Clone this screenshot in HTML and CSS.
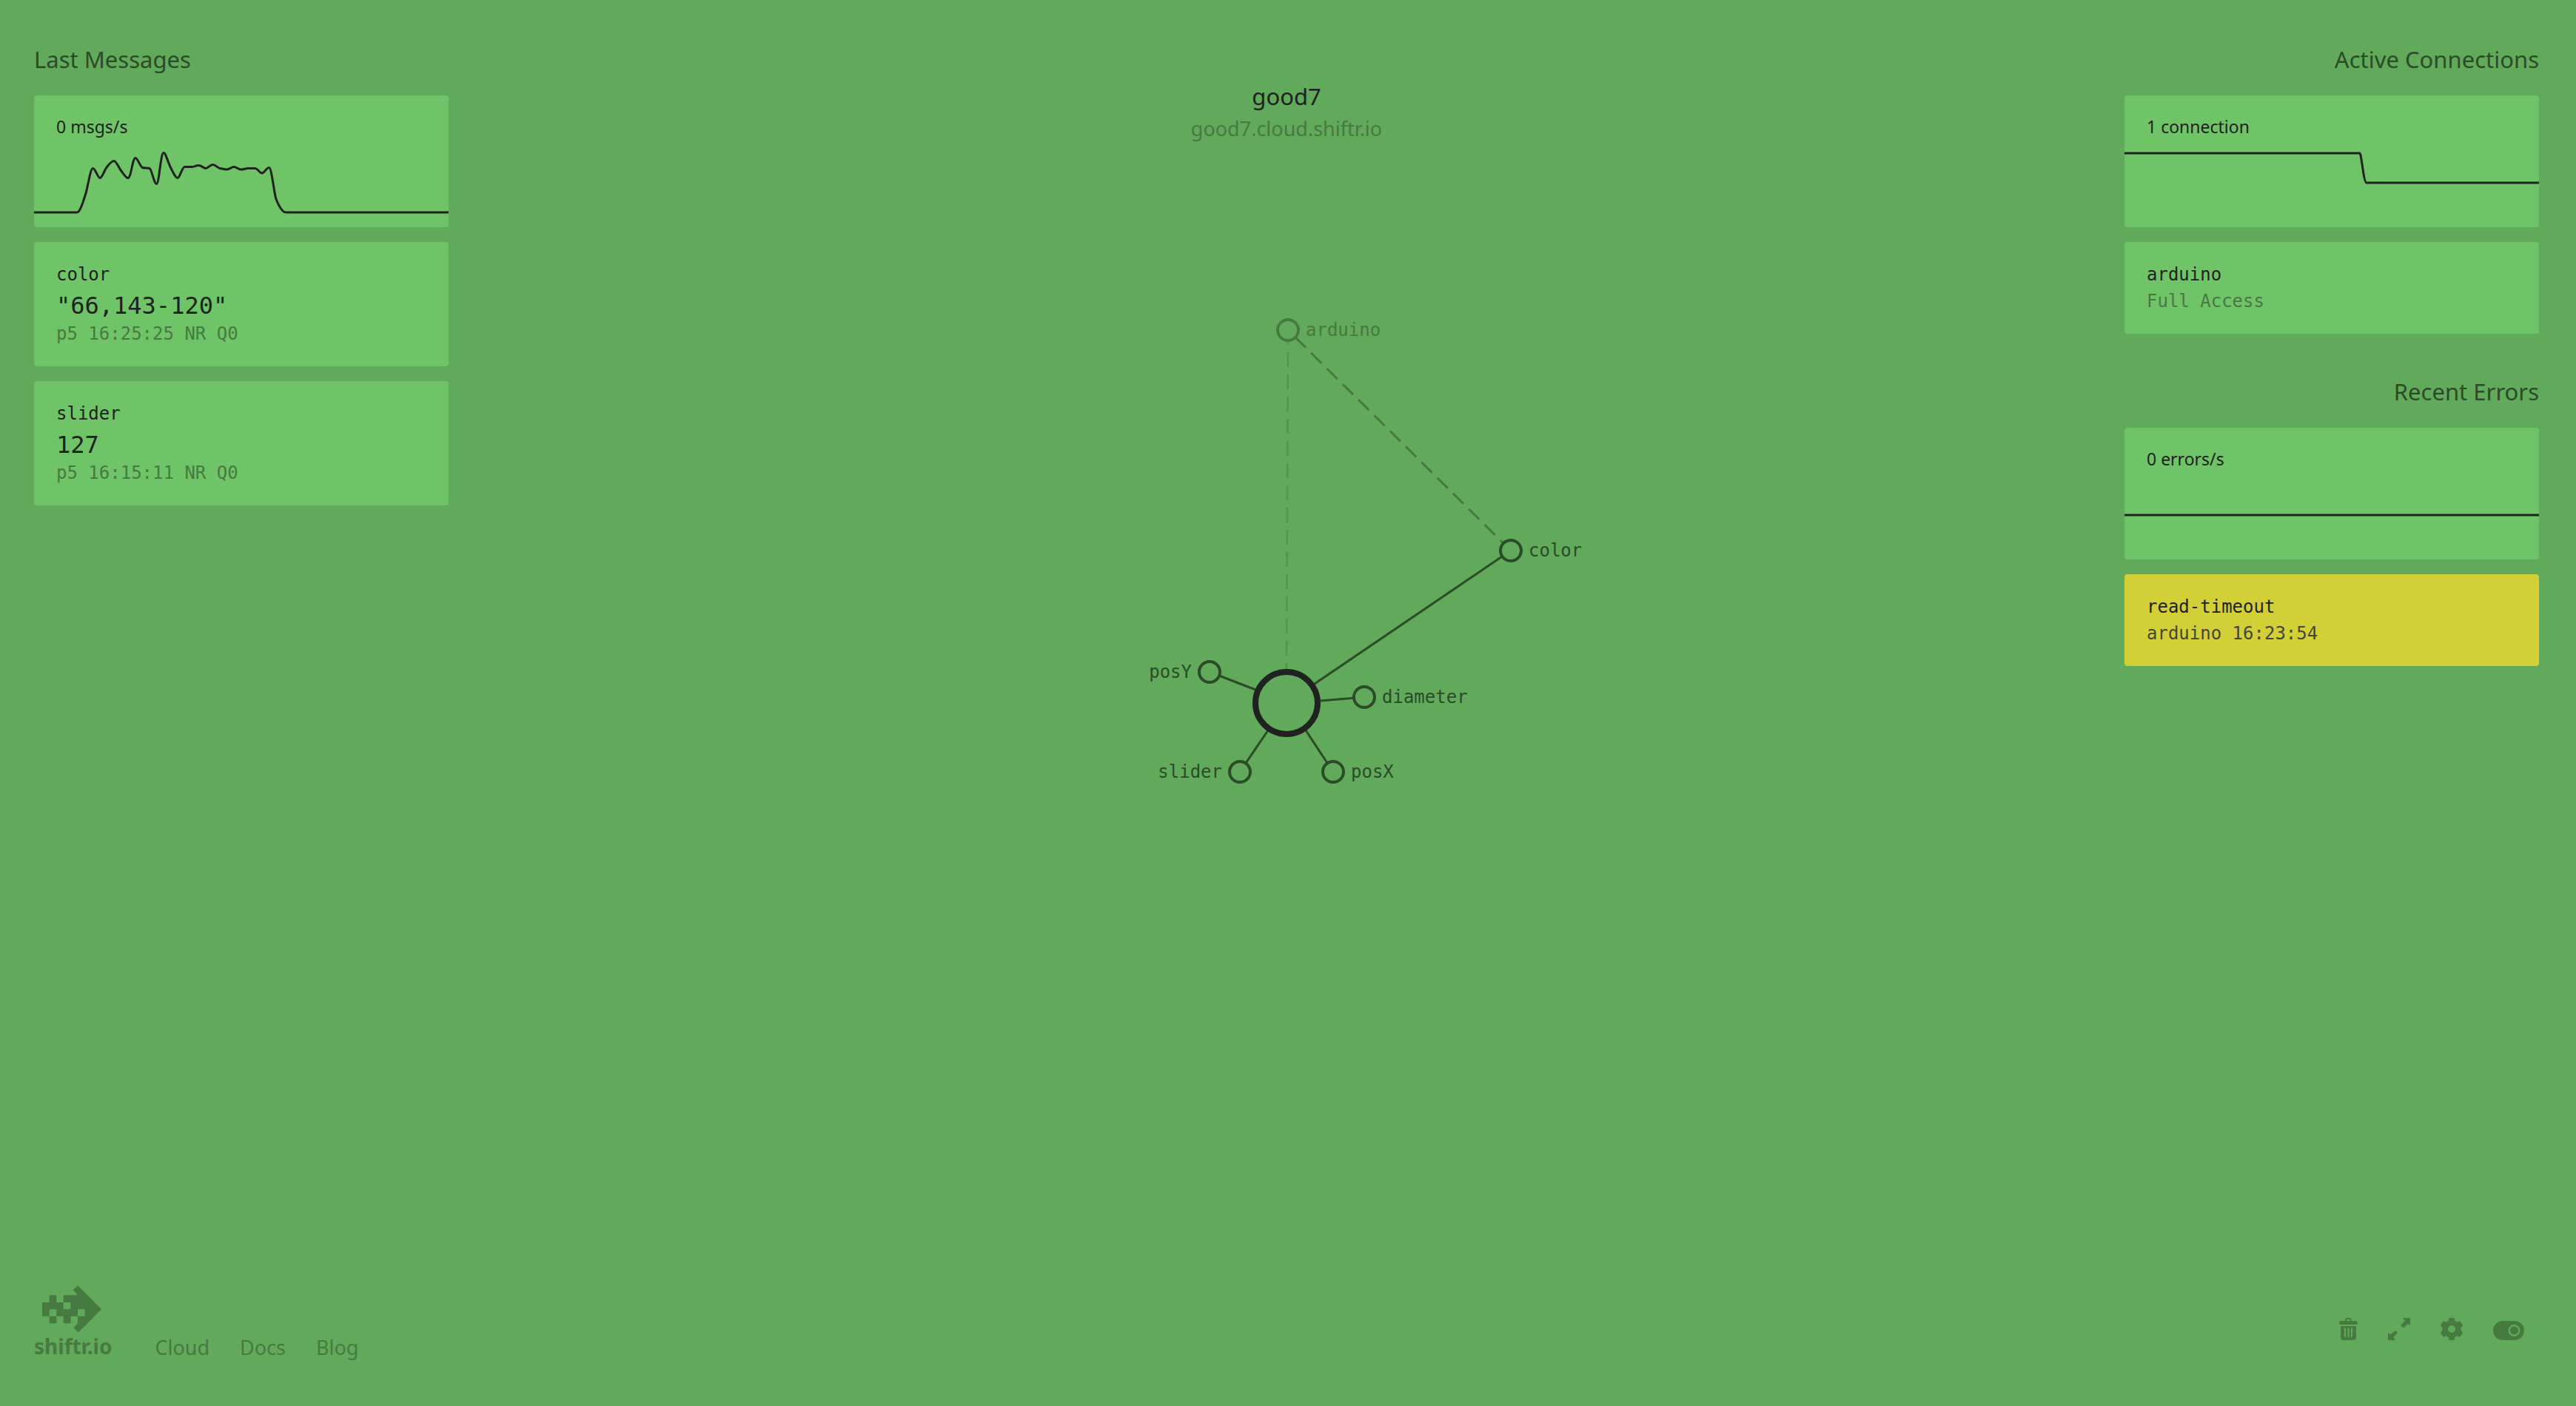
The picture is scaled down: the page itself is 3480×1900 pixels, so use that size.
FILE: index.html
```html
<!DOCTYPE html>
<html lang="en">
<head>
<meta charset="utf-8">
<meta name="viewport" content="width=device-width, initial-scale=1">
<title>good7 – shiftr.io</title>
<link rel="stylesheet" href="styles.css">
</head>
<body class="page">
<main class="board">
  <aside class="column">
    <section class="section">
      <h2 class="section-title">Last Messages</h2>
      <article class="card card-chart">
        <p class="chart-label">0 msgs/s</p>
        <svg class="chart" viewBox="0 0 560 116" preserveAspectRatio="none" aria-hidden="true">
          <path d="M0 96H57C58.500 96 59.500 96 60.500 94.500C64 90 67 80 70 70C73 60 76 36.500 79.500 36.500C83 36.500 86 49.500 89 49.500C92 49.500 95 39 98.500 34.500C102 30 105 26.500 108 26.500C111 26.500 114 35 117.500 39.500C121 44 124 49.500 127 49.500C131 49.500 133 22.500 137 22.500C140 22.500 143 34 146.500 35.500C149 36.500 153 35.500 156 36.500C159 37.500 162 57.500 165.500 57.500C169 57.500 171 15.500 175 15.500C178 15.500 181 29 184.500 35.500C188 42 191 49.500 194 49.500C197 49.500 200 34.500 203.500 34.500H213C216 34.500 219 32.500 222.500 32.500C226 32.500 229 36.500 232 36.500C235 36.500 238 31.500 241.500 31.500C245 31.500 248 36 251 36.500C254 37 257 38 260.500 38C264 38 267 34.500 270 34.500C273 34.500 276 38 279.500 38C283 38 286 36.500 289 36.500H298.500C302 36.500 305 43 308 43C311 43 314 35.500 317.500 35.500C321 35.500 324 69 327 78C330 86 333 91 336.500 94.500C338 96 339 96 341 96H560"/>
        </svg>
      </article>
      <article class="card">
        <p class="line">color</p>
        <p class="line value">"66,143-120"</p>
        <p class="line meta">p5 16:25:25 NR Q0</p>
      </article>
      <article class="card">
        <p class="line">slider</p>
        <p class="line value">127</p>
        <p class="line meta">p5 16:15:11 NR Q0</p>
      </article>
    </section>
  </aside>

  <div class="center">
    <header class="header">
      <h1 class="title">good7</h1>
      <p class="domain">good7.cloud.shiftr.io</p>
    </header>
    <svg class="graph" viewBox="0 0 1000 660" role="img" aria-label="Network graph">
      <g class="links">
        <path class="link link-faint" d="M502 32L500 490"/>
        <path class="link link-muted" d="M803 330L502 32" pathLength="424"/>
        <path class="link" d="M803 330L535 512M605 528L546 533M396 494L458 518M437 629L475 573M563 629L526 573"/>
      </g>
      <circle class="node node-muted" cx="502" cy="32" r="14"/>
      <circle class="node" cx="803" cy="330" r="14"/>
      <circle class="node" cx="605" cy="528" r="14"/>
      <circle class="node" cx="396" cy="494" r="14"/>
      <circle class="node" cx="437" cy="629" r="14"/>
      <circle class="node" cx="563" cy="629" r="14"/>
      <circle class="hub" cx="500" cy="536" r="42"/>
      <text class="label label-muted" x="526" y="40">arduino</text>
      <text class="label" x="827" y="338">color</text>
      <text class="label" x="629" y="536">diameter</text>
      <text class="label label-end" x="372" y="502">posY</text>
      <text class="label label-end" x="413" y="637">slider</text>
      <text class="label" x="587" y="637">posX</text>
    </svg>
  </div>

  <aside class="column column-right">
    <section class="section">
      <h2 class="section-title">Active Connections</h2>
      <article class="card card-chart">
        <p class="chart-label">1 connection</p>
        <svg class="chart" viewBox="0 0 560 116" preserveAspectRatio="none" aria-hidden="true">
          <path d="M0 16H318C320 16 323 56 327 56H560"/>
        </svg>
      </article>
      <article class="card">
        <p class="line">arduino</p>
        <p class="line meta">Full Access</p>
      </article>
    </section>
    <section class="section">
      <h2 class="section-title">Recent Errors</h2>
      <article class="card card-chart">
        <p class="chart-label">0 errors/s</p>
        <svg class="chart" viewBox="0 0 560 116" preserveAspectRatio="none" aria-hidden="true">
          <path d="M0 56H560"/>
        </svg>
      </article>
      <article class="card card-warning">
        <p class="line">read-timeout</p>
        <p class="line meta">arduino 16:23:54</p>
      </article>
    </section>
  </aside>
</main>

<footer class="footer">
  <a class="logo" href="#">
    <svg class="logo-mark" viewBox="112 81 240 192" aria-hidden="true">
      <path fill-rule="evenodd" d="M112 150H141V121H170V150H198V121H256L237 100L256 81L352 178L258 272L239 253L256 235V206H227V235H198V206H170V235H141V206H112ZM198 150V178H227V150ZM141 178V206H170V178ZM256 178V206H285V178Z"/>
    </svg>
    <span class="logo-name">shiftr.io</span>
  </a>
  <nav class="nav">
    <a class="nav-link" href="#">Cloud</a>
    <a class="nav-link" href="#">Docs</a>
    <a class="nav-link" href="#">Blog</a>
  </nav>
  <div class="tools">
    <button class="tool" type="button" aria-label="Clear">
      <svg width="25" height="30" viewBox="0 0 25 30" aria-hidden="true">
        <path fill-rule="evenodd" d="M8 4V3Q8 0 11 0H14Q17 0 17 3V4H22Q25 4 25 6.500Q25 9 22 9H3Q0 9 0 6.500Q0 4 3 4ZM10 4H15V3Q15 2 14 2H11Q10 2 10 3Z"/>
        <path fill-rule="evenodd" d="M2 11H23V26Q23 30 19 30H6Q2 30 2 26ZM7 14V25Q8 27 9 25V14Q8 12 7 14ZM11.500 14V25Q12.500 27 13.500 25V14Q12.500 12 11.500 14ZM16 14V25Q17 27 18 25V14Q17 12 16 14Z"/>
      </svg>
    </button>
    <button class="tool" type="button" aria-label="Full screen">
      <svg width="30" height="30" viewBox="0 0 30 30" aria-hidden="true">
        <path d="M20 0H29Q30 0 30 1V10L27 8L20.500 13.500L17 10L23 4ZM10 30H1Q0 30 0 29V20L3.500 22L10 17L13 20L7 26Z"/>
      </svg>
    </button>
    <button class="tool" type="button" aria-label="Settings">
      <svg width="30" height="30" viewBox="0 0 30 30" aria-hidden="true">
        <path fill-rule="evenodd" d="M13 0H17Q18.500 0 19 2L19.500 4L22 5.500L24 5Q26 4 27 5.500L29.500 9Q30 10.500 29 11.500L27.500 13V17L29 18.500Q30 19.500 29.500 21L27 24.500Q26 26 24 25L22 24.500L19.500 26L19 28Q18.500 30 17 30H13Q11.500 30 11 28L10.500 26L8 24.500L6 25Q4 26 3 24.500L0.500 21Q0 19.500 1 18.500L2.500 17V13L1 11.500Q0 10.500 0.500 9L3 5.500Q4 4 6 5L8 5.500L10.500 4L11 2Q11.500 0 13 0ZM15 10A5 5 0 1 0 15 20A5 5 0 1 0 15 10Z"/>
      </svg>
    </button>
    <button class="tool" type="button" aria-label="Toggle view" aria-pressed="true">
      <svg width="42" height="30" viewBox="0 0 42 30" aria-hidden="true">
        <path fill-rule="evenodd" d="M13 4H29A13 13 0 0 1 29 30H13A13 13 0 0 1 13 4ZM28.500 9A8 8 0 1 0 28.500 25A8 8 0 1 0 28.500 9Z"/>
        <circle cx="28.500" cy="17" r="5.500"/>
      </svg>
    </button>
  </div>
</footer>
</body>
</html>
```
FILE: styles.css
```css
* {
  box-sizing: border-box;
}

:root {
  --background: #61a95b;
  --card: #6fc468;
  --warning: #d2d036;
  --ink: #202221;
  --ink-soft: #2b4b29;
  --ink-muted: #467a41;
  --sans: "Noto Sans", sans-serif;
  --mono: "DejaVu Sans Mono", monospace;
}

h1,
h2,
p {
  margin: 0;
  font-weight: 400;
}

.page {
  display: flex;
  flex-direction: column;
  gap: 40px;
  min-height: 100vh;
  margin: 0;
  padding: 56px 50px 63px 46px;
  background: var(--background);
  color: var(--ink);
  font-family: var(--sans);
}

.board {
  display: grid;
  grid-template-columns: 560px 1fr 560px;
}

.column {
  display: flex;
  flex-direction: column;
  gap: 54px;
}

.section {
  display: flex;
  flex-direction: column;
  gap: 20px;
}

.section-title {
  margin-bottom: 5px;
  color: var(--ink-soft);
  font-size: 31px;
  line-height: 48px;
}

.column-right .section-title {
  text-align: right;
}

.card {
  padding: 26px 30px;
  border-radius: 4px;
  background: var(--card);
  font-family: var(--mono);
}

.card-chart {
  padding: 26px 0 0;
  font-family: var(--sans);
}

.card-warning {
  background: var(--warning);
}

.chart-label {
  padding: 0 30px 4px;
  font-size: 23px;
  line-height: 32px;
}

.chart {
  display: block;
  width: 100%;
  height: 116px;
  fill: none;
  stroke: var(--ink);
  stroke-width: 3px;
}

.line {
  font-size: 24px;
  line-height: 36px;
}

.value {
  padding-top: 4px;
  font-size: 32px;
  line-height: 40px;
}

.meta {
  color: var(--ink-muted);
}

.card-warning .meta {
  color: #45463a;
}

.center {
  display: flex;
  flex-direction: column;
  align-items: center;
  gap: 220px;
  padding-top: 50px;
}

.header {
  text-align: center;
}

.title {
  font-size: 31px;
  line-height: 48px;
}

.domain {
  color: var(--ink-muted);
  font-size: 27px;
  line-height: 40px;
}

.graph {
  width: 1000px;
  max-width: 100%;
  font-family: var(--mono);
}

.link {
  fill: none;
  stroke: var(--ink-soft);
  stroke-width: 3px;
}

.link-muted,
.link-faint {
  stroke: var(--ink-muted);
  stroke-dasharray: 20 10;
}

.link-faint {
  stroke: #55964f;
}

.node {
  fill: var(--background);
  stroke: var(--ink-soft);
  stroke-width: 4px;
}

.node-muted {
  stroke: var(--ink-muted);
}

.hub {
  fill: var(--background);
  stroke: var(--ink);
  stroke-width: 8px;
}

.label {
  fill: var(--ink-soft);
  font-size: 24px;
}

.label-muted {
  fill: var(--ink-muted);
}

.label-end {
  text-anchor: end;
}

.footer {
  display: flex;
  align-items: flex-end;
  gap: 58px;
  margin-top: auto;
  color: var(--ink-muted);
  font-size: 27px;
}

.logo {
  display: flex;
  flex-direction: column;
  color: inherit;
  text-decoration: none;
}

.logo-mark {
  width: 80px;
  height: 64px;
  margin-left: 11px;
  fill: currentColor;
}

.logo-name {
  font-size: 28px;
  font-weight: 700;
  line-height: 36px;
}

.nav {
  display: flex;
  gap: 41px;
}

.nav-link {
  color: inherit;
  line-height: 32px;
  text-decoration: none;
}

.tools {
  display: flex;
  gap: 41px;
  margin-left: auto;
  padding: 0 20px 26px 0;
}

.tool {
  padding: 0;
  border: 0;
  background: none;
  color: inherit;
  cursor: pointer;
}

.tool svg {
  display: block;
  fill: currentColor;
}
```
